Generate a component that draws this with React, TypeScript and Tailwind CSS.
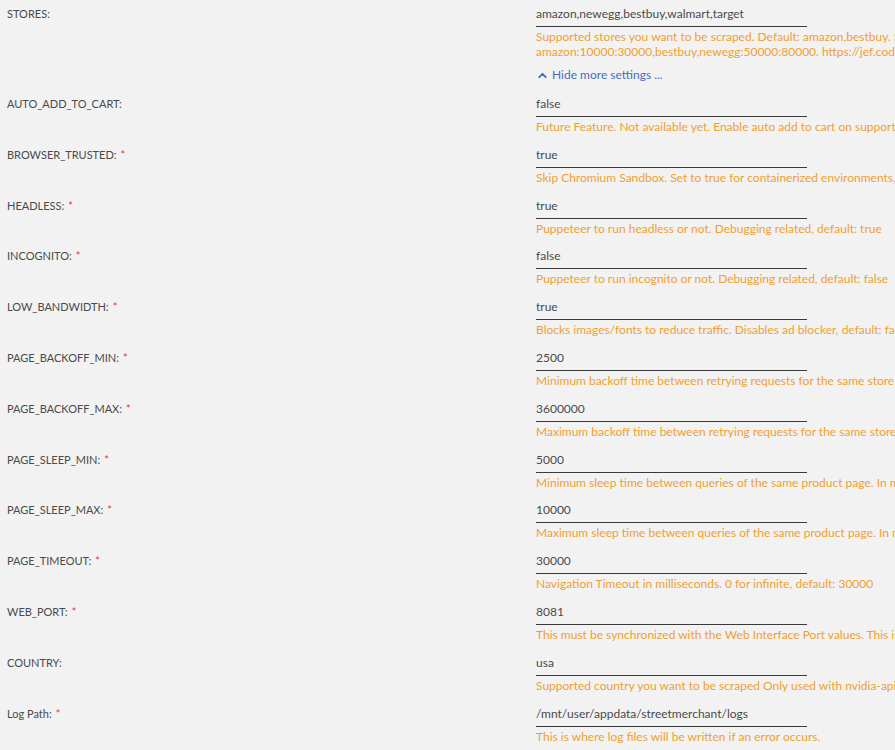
import { ChevronUp } from 'lucide-react';

type Setting = {
  label: string;
  value: string;
  desc: string[];
  required?: boolean;
};

const settings: Setting[] = [
  {
    label: 'AUTO_ADD_TO_CART:',
    value: 'false',
    desc: ['Future Feature. Not available yet. Enable auto add to cart on supported stores, default: false'],
  },
  {
    label: 'BROWSER_TRUSTED:',
    value: 'true',
    required: true,
    desc: ['Skip Chromium Sandbox. Set to true for containerized environments, default: true'],
  },
  {
    label: 'HEADLESS:',
    value: 'true',
    required: true,
    desc: ['Puppeteer to run headless or not. Debugging related, default: true'],
  },
  {
    label: 'INCOGNITO:',
    value: 'false',
    required: true,
    desc: ['Puppeteer to run incognito or not. Debugging related, default: false'],
  },
  {
    label: 'LOW_BANDWIDTH:',
    value: 'true',
    required: true,
    desc: ['Blocks images/fonts to reduce traffic. Disables ad blocker, default: false'],
  },
  {
    label: 'PAGE_BACKOFF_MIN:',
    value: '2500',
    required: true,
    desc: ['Minimum backoff time between retrying requests for the same store when a forbidden response is received, default: 10000'],
  },
  {
    label: 'PAGE_BACKOFF_MAX:',
    value: '3600000',
    required: true,
    desc: ['Maximum backoff time between retrying requests for the same store when a forbidden response is received, default: 3600000'],
  },
  {
    label: 'PAGE_SLEEP_MIN:',
    value: '5000',
    required: true,
    desc: ['Minimum sleep time between queries of the same product page. In milliseconds, default: 5000'],
  },
  {
    label: 'PAGE_SLEEP_MAX:',
    value: '10000',
    required: true,
    desc: ['Maximum sleep time between queries of the same product page. In milliseconds, default: 10000'],
  },
  {
    label: 'PAGE_TIMEOUT:',
    value: '30000',
    required: true,
    desc: ['Navigation Timeout in milliseconds. 0 for infinite, default: 30000'],
  },
  {
    label: 'WEB_PORT:',
    value: '8081',
    required: true,
    desc: ['This must be synchronized with the Web Interface Port values. This is the port the internal web server listens on'],
  },
  {
    label: 'COUNTRY:',
    value: 'usa',
    desc: ['Supported country you want to be scraped Only used with nvidia-api, default: usa'],
  },
  {
    label: 'Log Path:',
    value: '/mnt/user/appdata/streetmerchant/logs',
    required: true,
    desc: ['This is where log files will be written if an error occurs.'],
  },
];

function Label({ text, required }: { text: string; required?: boolean }) {
  return (
    <div className="pl-[7px] pt-[4px] text-[11px] leading-[20px] text-[#4a4a4a]">
      {text}
      {required && <span className="ml-[4px] text-[#e53935]">*</span>}
    </div>
  );
}

function Field({ value, desc }: { value: string; desc: string[] }) {
  return (
    <div className="min-w-0">
      <div className="w-[271px] border-b border-[#3a3a3a] pt-[4px] pb-[2px] text-[12px] leading-[20px] text-[#4a4a4a]">
        {value}
      </div>
      <div className="mt-[2px] text-[12px] leading-[15px] text-[#f0a030]">
        {desc.map((line) => (
          <div key={line} className="whitespace-nowrap">
            {line}
          </div>
        ))}
      </div>
    </div>
  );
}

export default function App() {
  return (
    <div
      className="h-[750px] w-[895px] overflow-hidden bg-[#f2f2f2]"
      style={{ fontFamily: 'Lato, "Noto Sans", sans-serif' }}
    >
      {/* STORES row, with the settings toggle */}
      <div className="grid grid-cols-[536px_1fr] pb-[7px]">
        <Label text="STORES:" />
        <div className="min-w-0">
          <Field
            value="amazon,newegg,bestbuy,walmart,target"
            desc={[
              'Supported stores you want to be scraped. Default: amazon,bestbuy. Separate multiple stores with a comma, e.g.',
              'amazon:10000:30000,bestbuy,newegg:50000:80000. https://jef.codes/streetmerchant/help/reference/#stores',
            ]}
          />
          <button className="mt-[8px] flex items-center gap-[3px] text-[12px] leading-[16px] text-[#486dba]">
            <ChevronUp size={13} strokeWidth={3.5} />
            Hide more settings ...
          </button>
        </div>
      </div>

      {settings.map((s) => (
        <div key={s.label} className="grid grid-cols-[536px_1fr] pb-[6.8px]">
          <Label text={s.label} required={s.required} />
          <Field value={s.value} desc={s.desc} />
        </div>
      ))}
    </div>
  );
}
